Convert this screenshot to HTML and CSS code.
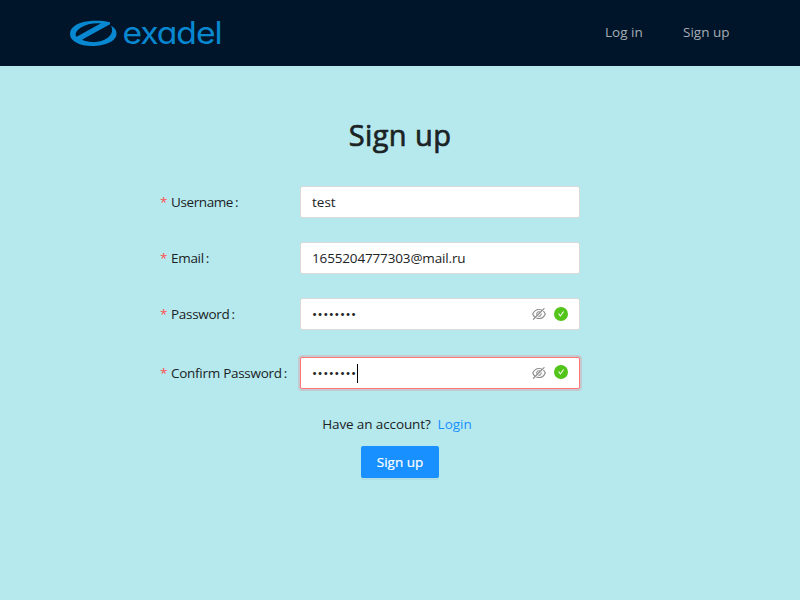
FILE: index.html
```html
<!DOCTYPE html>
<html lang="en">
<head>
<meta charset="utf-8">
<title>Sign up</title>
<link rel="stylesheet" href="styles.css">
</head>
<body>
<svg width="0" height="0" class="sprite">
  <symbol id="eye" viewBox="64 64 896 896"><path d="M942.2 486.2Q889.47 375.11 816.7 305l-50.88 50.88C807.31 395.53 843.45 447.4 874.7 512 791.5 684.2 673.4 766 512 766q-72.67 0-133.87-22.38L323 798.75Q408 838 512 838q288.3 0 430.2-300.3a60.29 60.29 0 000-51.5zm-63.57-320.64L836 122.88a8 8 0 00-11.32 0L715.31 232.2Q624.86 186 512 186q-288.3 0-430.2 300.3a60.3 60.3 0 000 51.5q56.69 119.4 136.5 191.41L112.48 835a8 8 0 000 11.31L155.17 889a8 8 0 0011.31 0l712.15-712.12a8 8 0 000-11.32zM149.3 512C232.6 339.8 350.7 258 512 258c54.54 0 104.13 9.36 149.12 28.39l-70.3 70.3a176 176 0 00-238.13 238.13l-83.42 83.42C223.1 637.49 183.3 582.28 149.3 512zm246.7 0a112.11 112.11 0 01146.2-106.69L401.31 546.2A112 112 0 01396 512z"/><path d="M508 624c-3.46 0-6.87-.16-10.25-.47l-52.82 52.82a176.09 176.09 0 00227.42-227.42l-52.82 52.82c.31 3.38.47 6.79.47 10.25a111.94 111.94 0 01-112 112z"/></symbol>
  <symbol id="check" viewBox="64 64 896 896"><circle cx="512" cy="512" r="448"/><path fill="#fff" d="M705.5 365.7l-210.6 292a31.8 31.8 0 01-51.7 0L318.5 484.9c-3.8-5.3 0-12.7 6.5-12.7h46.9c10.2 0 19.9 4.9 25.9 13.3l71.2 98.8 157.2-218c6-8.3 15.6-13.3 25.9-13.3H699c6.500 0 10.300 7.400 6.500 12.700z"/></symbol>
</svg>
<header class="header">
  <svg class="logo" width="156" height="34" viewBox="0 0 156 34">
    <path d="M40 6.200C34 4.800 29 4.500 23 4.800C9 5.500 0 10.500 0 18C0 25.500 10 30 22 30C36 30 46.500 25 46.500 17.500C46.500 14 44.500 11.500 41 9.800C43 14 42.500 18 38 21.500C33.500 25 27 26.700 21 26C16.500 25.700 13.500 25 12.300 23.600L40 8.200ZM31 7.300L6.600 20.800C4.500 18.500 6 14.500 11 11.500C16 8 24 6.600 31 7.300Z"/>
    <text class="wordmark" x="52.500" y="28.300" textLength="99" lengthAdjust="spacingAndGlyphs">exadel</text>
  </svg>
  <nav class="nav"><a class="nav-in">Log in</a><a class="nav-up">Sign up</a></nav>
</header>
<main class="main">
  <h1 class="title"><span>Sign up</span></h1>
  <form class="form">
    <div class="row"><label class="label"><span class="star">*</span><span class="name name-user">Username</span><span class="colon">:</span></label><div class="field"><span>test</span></div></div>
    <div class="row"><label class="label"><span class="star">*</span><span class="name">Email</span><span class="colon">:</span></label><div class="field"><span class="mail">1655204777303@mail.ru</span></div></div>
    <div class="row row-password"><label class="label"><span class="star">*</span><span class="name">Password</span><span class="colon">:</span></label><div class="field"><span class="dots">••••••••</span><span class="icons"><svg class="eye"><use href="#eye"/></svg><svg class="check"><use href="#check"/></svg></span></div></div>
    <div class="row"><label class="label"><span class="star">*</span><span class="name name-confirm">Confirm Password</span><span class="colon">:</span></label><div class="field focused"><span class="dots">••••••••</span><span class="caret"></span><span class="icons"><svg class="eye"><use href="#eye"/></svg><svg class="check raised"><use href="#check"/></svg></span></div></div>
  </form>
  <p class="account"><span class="question">Have an account?</span><a>Login</a></p>
  <button class="submit"><span>Sign up</span></button>
</main>
</body>
</html>
```
FILE: styles.css
```css
* { box-sizing: border-box; }
body { margin: 0; height: 600px; overflow: hidden; background: #b5e9ee; color: #1b2324; font: 13.5px/22px "Open Sans", "Noto Sans", sans-serif; }
.sprite { position: absolute; }
.header { height: 66px; padding: 0 70px; background: #001529; display: flex; justify-content: space-between; align-items: center; }
.logo { fill: #0788d1; overflow: visible; }
.wordmark { font-family: Inter, sans-serif; font-size: 31px; font-weight: 400; letter-spacing: -1px; font-feature-settings: "cv11", "ss03"; }
.nav { display: flex; gap: 40px; color: #a6adb4; white-space: nowrap; padding-bottom: 2px; }
.nav-in { width: 38px; }
.nav-up { width: 47px; }
.main { display: flex; flex-direction: column; align-items: center; }
.title { margin: 46px 0 0; font-size: 29px; line-height: 46px; font-weight: 500; letter-spacing: .4px; -webkit-text-stroke: .7px currentColor; }
.form { width: 480px; margin: 28px 0 0; }
.row { display: flex; height: 32px; margin-bottom: 24px; align-items: center; }
.row-password { margin-bottom: 27px; }
.label { width: 140px; display: flex; }
.star { width: 11px; color: #ff4d4f; }
.name { white-space: nowrap; letter-spacing: -.3px; }
.name-user { letter-spacing: -.4px; }
.name-confirm { letter-spacing: -.28px; }
.colon { margin-left: 2px; }
.field { width: 280px; height: 32px; border: 1px solid #d9d9d9; border-radius: 2px; background: #fff; padding: 0 11px; display: flex; align-items: center; }
.mail { letter-spacing: -.15px; }
.focused { border-color: #ff7875; box-shadow: 0 0 0 2px rgba(255,77,79,.2); }
.dots { letter-spacing: .5px; }
.caret { width: 1px; height: 19px; background: #000; }
.icons { display: flex; gap: 8px; margin-left: auto; }
.icons svg { width: 14px; height: 14px; }
.eye { fill: #8c8c8c; }
.check { fill: #52c41a; }
.raised { margin-top: -1px; }
.account { margin: 0; padding-right: 6px; display: flex; gap: 7px; white-space: nowrap; }
.question { letter-spacing: -.12px; }
.account a { color: #1890ff; }
.submit { width: 78px; height: 32px; margin: 11px 0 0; padding: 0; border: 0; border-radius: 2px; background: #1890ff; color: #fff; font: inherit; -webkit-text-stroke: .2px #fff; box-shadow: 0 2px 0 rgba(0,0,0,.045); }
```
